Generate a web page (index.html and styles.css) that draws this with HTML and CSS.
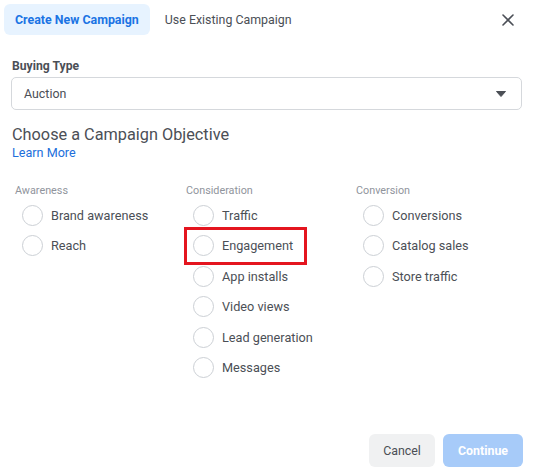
FILE: index.html
```html
<!DOCTYPE html>
<html>
<head>
<meta charset="utf-8">
<link rel="stylesheet" href="styles.css">
</head>
<body>
<div class="dialog">
  <div class="header">
    <div class="tab tab-active">Create New Campaign</div>
    <div class="tab">Use Existing Campaign</div>
    <div class="close">
      <svg width="12" height="12" viewBox="0 0 12 12"><path d="M1 1 L11 11 M11 1 L1 11" stroke="#4b4f56" stroke-width="1.6" stroke-linecap="round" fill="none"/></svg>
    </div>
  </div>

  <div class="field-label">Buying Type</div>
  <div class="select">
    <span>Auction</span>
    <svg class="caret" width="10" height="6" viewBox="0 0 10 6"><path d="M0.5 0.5 H9.5 L5 5.5 Z" fill="#4b4f56" stroke="#4b4f56" stroke-linejoin="round"/></svg>
  </div>

  <div class="heading">Choose a Campaign Objective</div>
  <a class="learn">Learn More</a>

  <div class="columns">
    <div class="col">
      <div class="col-title">Awareness</div>
      <div class="row"><span class="radio"></span>Brand awareness</div>
      <div class="row"><span class="radio"></span>Reach</div>
    </div>
    <div class="col">
      <div class="col-title">Consideration</div>
      <div class="row"><span class="radio"></span>Traffic</div>
      <div class="row highlighted"><span class="radio"></span>Engagement<span class="mark"></span></div>
      <div class="row"><span class="radio"></span>App installs</div>
      <div class="row"><span class="radio"></span>Video views</div>
      <div class="row"><span class="radio"></span>Lead generation</div>
      <div class="row"><span class="radio"></span>Messages</div>
    </div>
    <div class="col">
      <div class="col-title">Conversion</div>
      <div class="row"><span class="radio"></span>Conversions</div>
      <div class="row"><span class="radio"></span>Catalog sales</div>
      <div class="row"><span class="radio"></span>Store traffic</div>
    </div>
  </div>

  <div class="footer">
    <button class="btn btn-cancel">Cancel</button>
    <button class="btn btn-continue">Continue</button>
  </div>
</div>
</body>
</html>
```

FILE: styles.css
```css
html, body {
  margin: 0;
  padding: 0;
  background: #ffffff;
}
body {
  font-family: Roboto, "Liberation Sans", sans-serif;
  color: #4b4f56;
}
.dialog {
  width: 535px;
  height: 475px;
  box-sizing: border-box;
  display: flex;
  flex-direction: column;
  padding: 0 0 8px 0;
}
.header {
  display: flex;
  align-items: center;
  gap: 4px;
  padding: 4px 4px 0 4px;
  height: 31px;
}
.tab {
  height: 31px;
  line-height: 31px;
  padding: 0 11px;
  font-size: 12.4px;
  color: #4b4f56;
  border-radius: 6px;
}
.tab-active {
  background: #e7f3ff;
  color: #1b74e4;
  font-weight: 700;
}
.close {
  margin-left: auto;
  margin-right: 17px;
  width: 12px;
  height: 12px;
  display: flex;
}
.field-label {
  margin: 23px 0 0 12px;
  font-size: 12.2px;
  line-height: 16px;
  font-weight: 700;
  color: #4b4f56;
}
.select {
  margin: 3px 13px 0 11px;
  height: 33px;
  box-sizing: border-box;
  border: 1px solid #d5d8dc;
  border-radius: 5px;
  display: flex;
  align-items: center;
  padding: 0 15px 0 12px;
  font-size: 12.4px;
  color: #4b4f56;
}
.select .caret {
  margin-left: auto;
}
.heading {
  margin: 14px 0 0 12px;
  font-size: 16.3px;
  line-height: 21px;
  color: #4b4f56;
}
.learn {
  display: block;
  margin-left: 12px;
  font-size: 12.6px;
  line-height: 16px;
  color: #216fdb;
}
.columns {
  display: grid;
  grid-template-columns: 171px 170px 170px;
  margin: 23px 0 0 15px;
}
.col-title {
  font-size: 10.8px;
  line-height: 14px;
  color: #90949c;
  margin-bottom: 2px;
}
.row {
  position: relative;
  display: flex;
  align-items: center;
  height: 30.5px;
  font-size: 12.7px;
  color: #4b4f56;
  padding-left: 7px;
}
.radio {
  width: 21px;
  height: 21px;
  box-sizing: border-box;
  border: 1px solid #ccd0d5;
  border-radius: 50%;
  margin-right: 8px;
  flex: none;
}
.mark {
  position: absolute;
  left: -2px;
  top: -4px;
  width: 123px;
  height: 38px;
  box-sizing: border-box;
  border: 3px solid #e4151f;
}
.footer {
  margin-top: auto;
  display: flex;
  justify-content: flex-end;
  gap: 8px;
  padding-right: 12px;
}
.btn {
  height: 33px;
  border: none;
  border-radius: 6px;
  font-family: Roboto, "Liberation Sans", sans-serif;
  font-size: 12.4px;
  padding: 0;
}
.btn-cancel {
  width: 66px;
  background: #f0f1f2;
  color: #4b4f56;
}
.btn-continue {
  width: 80px;
  background: #a7cbf9;
  color: #ffffff;
  font-weight: 700;
}
```
